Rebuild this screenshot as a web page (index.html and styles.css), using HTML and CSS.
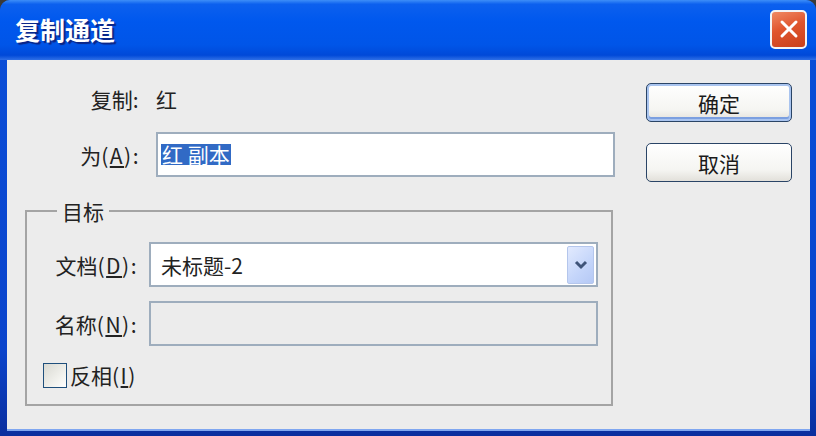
FILE: index.html
```html
<!DOCTYPE html>
<html lang="zh-CN">
<head>
    <meta charset="UTF-8">
    <meta name="viewport" content="width=device-width, initial-scale=1.0">
    <title>复制通道</title>
    <link rel="stylesheet" href="styles.css">
</head>
<body>
    <div class="window">
        <div class="titlebar">
            <span class="title">复制通道</span>
            <button type="button" class="close" aria-label="关闭">
                <svg width="20" height="20" viewBox="0 0 20 20">
                    <path d="M3 3 L17 17 M17 3 L3 17" stroke="#ffffff" stroke-width="3" stroke-linecap="round"/>
                </svg>
            </button>
        </div>
        <div class="content">
            <div class="main">
                <div class="row row-source">
                    <span class="label">复制<span class="ascii">:</span></span>
                    <span class="value">红</span>
                </div>
                <div class="row row-as">
                    <label class="label">为<span class="ascii">(<u>A</u>):</span></label>
                    <div class="textbox"><span class="sel">红 副本</span></div>
                </div>
                <fieldset class="target">
                    <legend>目标</legend>
                    <div class="row field">
                        <label class="label">文档<span class="ascii">(<u>D</u>):</span></label>
                        <div class="select">
                            <span class="select-text">未标题-2</span>
                            <span class="drop">
                                <svg width="14" height="10" viewBox="0 0 14 10">
                                    <path d="M2 2 L7 7 L12 2" fill="none" stroke="#3f5479" stroke-width="3"/>
                                </svg>
                            </span>
                        </div>
                    </div>
                    <div class="row field field-name">
                        <label class="label">名称<span class="ascii">(<u>N</u>):</span></label>
                        <div class="textbox disabled"></div>
                    </div>
                    <div class="check-row">
                        <span class="checkbox"></span>
                        <span>反相<span class="ascii">(<u>I</u>)</span></span>
                    </div>
                </fieldset>
            </div>
            <div class="actions">
                <button type="button" class="btn btn-default">确定</button>
                <button type="button" class="btn">取消</button>
            </div>
        </div>
    </div>
</body>
</html>
```
FILE: styles.css
```css
html, body {
    margin: 0;
    padding: 0;
    background-color: #3a3a3a;
}
body {
    font-family: "Noto Sans CJK SC", "Liberation Sans", sans-serif;
    font-size: 21px;
    color: #222222;
}
.window {
    width: 816px;
    height: 436px;
    display: flex;
    flex-direction: column;
    border-radius: 10px 10px 0 0;
    overflow: hidden;
    background: linear-gradient(180deg, #0a4fd9, #0a44cc 80%, #0a2e9e);
}
.titlebar {
    height: 60px;
    flex: none;
    display: flex;
    align-items: center;
    justify-content: space-between;
    padding: 0 9px 0 15px;
    background: linear-gradient(180deg, #3d8ef8 0%, #0c60ee 7%, #0058ee 35%, #0055e8 75%, #0049d8 92%, #2f6fe6 100%);
}
.title {
    color: #ffffff;
    font-size: 25px;
    font-weight: bold;
    line-height: 30px;
    text-shadow: 2px 2px 1px #0b2585;
    margin-top: -2px;
}
.close {
    width: 37px;
    height: 39px;
    margin-top: -2px;
    padding: 0;
    display: flex;
    align-items: center;
    justify-content: center;
    border: 2px solid #f4f4f4;
    border-radius: 5px;
    background: linear-gradient(160deg, #f08a64, #e0552d 45%, #c8401c);
}
.content {
    flex: 1;
    display: flex;
    margin: 0 6px 7px 7px;
    background-color: #ececec;
    box-shadow: 0 2px 0 #7fa6f0;
}
.main {
    width: 590px;
    padding-left: 18px;
}
.ascii {
    letter-spacing: 1.5px;
}
.row {
    display: flex;
    align-items: center;
}
.label {
    width: 115px;
    margin-right: 16px;
    text-align: right;
    line-height: 24px;
    white-space: nowrap;
}
.row-source {
    margin-top: 27px;
    height: 24px;
}
.row-as {
    margin-top: 21px;
    height: 45px;
}
.value {
    line-height: 24px;
}
.textbox {
    box-sizing: border-box;
    width: 459px;
    height: 45px;
    display: flex;
    align-items: center;
    padding-left: 3px;
    background-color: #ffffff;
    border: 2px solid #9eadbd;
}
.sel {
    background-color: #316ac5;
    color: #ffffff;
    line-height: 21px;
    padding: 0 1px;
}
.target {
    box-sizing: border-box;
    width: 588px;
    margin: 23px 0 0;
    padding: 20px 13px 16px 0;
    border: 2px solid #a4a4a4;
}
.target legend {
    margin-left: 30px;
    padding: 0 5px;
    line-height: 22px;
}
.field .label {
    width: 111px;
    margin-right: 11px;
}
.field {
    height: 45px;
}
.field-name {
    margin-top: 14px;
}
.select {
    box-sizing: border-box;
    width: 449px;
    height: 45px;
    display: flex;
    align-items: center;
    padding: 0 2px 0 10px;
    background-color: #ffffff;
    border: 2px solid #9eadbd;
}
.select-text {
    flex: 1;
}
.drop {
    box-sizing: border-box;
    width: 27px;
    height: 38px;
    display: flex;
    align-items: center;
    justify-content: center;
    border: 1px solid #b4c6ec;
    border-radius: 2px;
    background: linear-gradient(135deg, #e2eafe, #c4d5fa 60%, #b5c9f5);
}
.field-name .textbox {
    width: 449px;
}
.textbox.disabled {
    background-color: #ececec;
}
.check-row {
    display: flex;
    align-items: center;
    gap: 3px;
    margin-top: 16px;
    padding-left: 16px;
    height: 26px;
    line-height: 26px;
}
.checkbox {
    box-sizing: border-box;
    width: 24px;
    height: 25px;
    border: 1px solid #1f4f7c;
    background: linear-gradient(135deg, #d9d9d2, #f4f4f0 70%, #ffffff);
}
.actions {
    display: flex;
    flex-direction: column;
    gap: 21px;
    margin-left: 31px;
    padding-top: 23px;
}
.btn {
    width: 146px;
    height: 39px;
    padding: 0;
    font-family: inherit;
    font-size: 21px;
    color: #1a1a1a;
    border: 1px solid #2a4466;
    border-radius: 5px;
    background: linear-gradient(180deg, #ffffff, #f5f5f2 70%, #e2e0da);
}
.btn-default {
    box-shadow: inset 0 0 0 2px #a9c4ef, inset 0 -2px 0 2px #7b9fe0;
}
```
